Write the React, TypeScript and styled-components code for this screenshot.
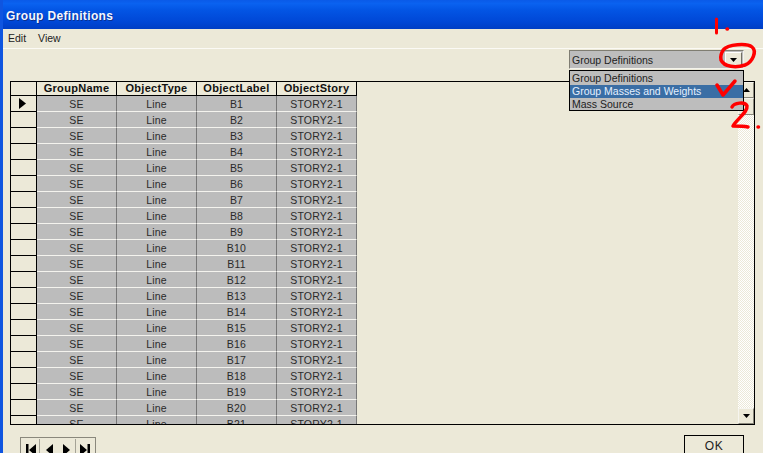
import React from "react";
import styled, { createGlobalStyle } from "styled-components";

const rows = Array.from({ length: 21 }, (_, i) => `B${i + 1}`);
const columns = ["GroupName", "ObjectType", "ObjectLabel", "ObjectStory"];
const options = ["Group Definitions", "Group Masses and Weights", "Mass Source"];

const GlobalStyle = createGlobalStyle`
  html, body { margin: 0; padding: 0; background: #ece9d8; }
  body { font-family: "Liberation Sans", Arial, sans-serif; font-size: 11px; color: #222; }
`;

const App: React.FC = () => {
  return (
    <>
      <GlobalStyle />
      <Window>
        <TitleBar>Group Definitions</TitleBar>
        <MenuBar>
          <MenuItem>Edit</MenuItem>
          <MenuItem>View</MenuItem>
        </MenuBar>
        <Content>
          <TopRow>
            <Combo>
              <ComboValue>Group Definitions</ComboValue>
              <ComboButton>
                <svg width="7" height="4" viewBox="0 0 7 4"><path d="M0 0h7L3.5 4z" fill="#000" /></svg>
              </ComboButton>
              <ComboList>
                {options.map((o, i) => (
                  <ComboOption key={o} $active={i === 1}>{o}</ComboOption>
                ))}
              </ComboList>
            </Combo>
          </TopRow>
          <Grid>
            <GridBody>
              <HeadRow>
                <RowHead />
                {columns.map((c) => <HeadCell key={c}>{c}</HeadCell>)}
              </HeadRow>
              {rows.map((label, i) => (
                <Row key={label}>
                  <RowHead>
                    {i === 0 && (
                      <svg width="7" height="11" viewBox="0 0 7 11"><path d="M0 0l7 5.5L0 11z" fill="#000" /></svg>
                    )}
                  </RowHead>
                  <Cell>SE</Cell>
                  <Cell>Line</Cell>
                  <Cell>{label}</Cell>
                  <Cell>STORY2-1</Cell>
                </Row>
              ))}
            </GridBody>
            <ScrollBar>
              <ScrollButton>
                <svg width="7" height="4" viewBox="0 0 7 4"><path d="M3.5 0L7 4H0z" fill="#000" /></svg>
              </ScrollButton>
              <ScrollThumb />
              <ScrollTrack />
              <ScrollButton>
                <svg width="7" height="4" viewBox="0 0 7 4"><path d="M0 0h7L3.5 4z" fill="#000" /></svg>
              </ScrollButton>
            </ScrollBar>
          </Grid>
          <BottomRow>
            <Navigator>
              <NavButton>
                <svg width="10" height="12" viewBox="0 0 10 12"><path d="M0 0h2.500v12H0zM10 0v12L3 6z" fill="#000" /></svg>
              </NavButton>
              <NavButton $plain>
                <svg width="7" height="12" viewBox="0 0 7 12"><path d="M7 0v12L0 6z" fill="#000" /></svg>
              </NavButton>
              <NavButton>
                <svg width="7" height="12" viewBox="0 0 7 12"><path d="M0 0v12l7-6z" fill="#000" /></svg>
              </NavButton>
              <NavButton $plain>
                <svg width="10" height="12" viewBox="0 0 10 12"><path d="M10 0H7.500v12H10zM0 0v12l7-6z" fill="#000" /></svg>
              </NavButton>
            </Navigator>
            <OkButton>OK</OkButton>
          </BottomRow>
        </Content>
        <Annotations width="763" height="453" viewBox="0 0 763 453" fill="none" stroke="#f00" strokeLinecap="round" strokeLinejoin="round">
          <path d="M716.500 19v14" strokeWidth="3" />
          <path d="M727 29h.5" strokeWidth="3.500" />
          <path d="M723 50C728 44 747 43 752 47C757 51 753 62 745 65C736 68 724 67 721 60C720 56 721 53 724 49" strokeWidth="3.500" />
          <path d="M717 85l6 10 12-14" strokeWidth="3.500" />
          <path d="M732 107c2-4 13-6 15-1 1 6-10 13-14 20 5 0 10 0 15 1" strokeWidth="3.500" />
          <path d="M758 127h.5" strokeWidth="3.500" />
        </Annotations>
      </Window>
    </>
  );
};

export default App;

const Window = styled.div`
  position: relative;
  width: 763px;
  height: 453px;
  overflow: hidden;
  display: flex;
  flex-direction: column;
  box-sizing: border-box;
  border-left: 3px solid #0f55e0;
  background: #ece9d8;
`;

const TitleBar = styled.div`
  height: 29px;
  margin-left: -3px;
  padding: 6px 0 0 6px;
  box-sizing: border-box;
  flex-shrink: 0;
  background: linear-gradient(180deg, #0a5ae8 0%, #0a62f0 12%, #0355e4 35%, #0047d6 75%, #003ec4 100%);
  color: #f4f7ff;
  font-size: 12px;
  font-weight: bold;
  letter-spacing: 0.35px;
  line-height: 20px;
  text-shadow: 1px 1px 0 #0a2f8f;
`;

const MenuBar = styled.div`
  height: 20px;
  flex-shrink: 0;
  display: flex;
  align-items: center;
  gap: 12px;
  padding: 0 0 2px 5px;
  box-sizing: border-box;
  border-bottom: 1px solid #fbfaf5;
`;

const MenuItem = styled.span`
  font-size: 10.500px;
`;

const Content = styled.div`
  flex: 1;
  display: flex;
  flex-direction: column;
  padding-left: 7px;
  min-height: 0;
`;

const TopRow = styled.div`
  height: 32px;
  flex-shrink: 0;
  display: flex;
  justify-content: flex-end;
  padding: 1px 19px 0 0;
  box-sizing: border-box;
`;

const Combo = styled.div`
  position: relative;
  width: 175px;
  height: 19px;
  box-sizing: border-box;
  display: flex;
  align-items: center;
  justify-content: space-between;
  padding: 0 1px 0 2px;
  background: #bdbdbd;
  border: 1px solid;
  border-color: #7f7d72 #f4f3ec #f4f3ec #7f7d72;
`;

const ComboValue = styled.span`
  font-size: 10.500px;
`;

const ComboButton = styled.div`
  width: 17px;
  height: 15px;
  box-sizing: border-box;
  display: flex;
  align-items: center;
  justify-content: center;
  background: #ece9d8;
  border: 1px solid;
  border-color: #fff #716f64 #716f64 #fff;
`;

const ComboList = styled.div`
  position: absolute;
  top: 19px;
  left: -1px;
  width: 175px;
  height: 41px;
  box-sizing: border-box;
  padding-top: 1px;
  background: #bdbdbd;
  border: 1px solid #000;
  z-index: 2;
`;

const ComboOption = styled.div<{ $active: boolean }>`
  height: 13px;
  line-height: 13px;
  padding-left: 2px;
  font-size: 10.500px;
  background: ${({ $active }) => ($active ? "#3a6ea5" : "transparent")};
  color: ${({ $active }) => ($active ? "#e4f0ff" : "#222")};
`;

const Grid = styled.div`
  width: 745px;
  height: 344px;
  flex-shrink: 0;
  box-sizing: border-box;
  border: 1px solid #000;
  display: flex;
  overflow: hidden;
`;

const GridBody = styled.div`
  flex: 1;
  overflow: hidden;
  min-width: 0;
`;

const Row = styled.div`
  display: flex;
  height: 16px;
`;

const HeadRow = styled(Row)`
  height: 14px;
`;

const RowHead = styled.div`
  width: 26px;
  box-sizing: border-box;
  display: flex;
  align-items: center;
  justify-content: center;
  border-right: 1px solid #000;
  border-bottom: 1px solid #000;
  background: #ece9d8;
  padding-right: 3px;
`;

const HeadCell = styled.div`
  width: 80px;
  box-sizing: border-box;
  text-align: center;
  font-weight: bold;
  font-size: 11px;
  line-height: 13px;
  letter-spacing: 0.3px;
  color: #111;
  background: #ece9d8;
  border-right: 1px solid #000;
  border-bottom: 1px solid #000;
`;

const Cell = styled.div`
  width: 80px;
  box-sizing: border-box;
  padding-top: 1px;
  text-align: center;
  font-size: 10.500px;
  line-height: 15px;
  letter-spacing: 0.2px;
  color: #2a2a2a;
  background: #bcbcbc;
  border-right: 1px solid #777;
  border-bottom: 1px solid #f4f3ee;
`;

const ScrollBar = styled.div`
  width: 16px;
  flex-shrink: 0;
  display: flex;
  flex-direction: column;
`;

const ScrollButton = styled.div`
  width: 16px;
  height: 16px;
  flex-shrink: 0;
  box-sizing: border-box;
  display: flex;
  align-items: center;
  justify-content: center;
  background: #ece9d8;
  border: 1px solid;
  border-color: #f6f5ef #8a887c #8a887c #f6f5ef;
`;

const ScrollThumb = styled(ScrollButton)`
  height: 17px;
`;

const ScrollTrack = styled.div`
  flex: 1;
  background-color: #f5f4ec;
  background-image: conic-gradient(#ece9d8 25%, #fff 0 50%, #ece9d8 0 75%, #fff 0);
  background-size: 2px 2px;
`;

const BottomRow = styled.div`
  display: flex;
  justify-content: space-between;
  align-items: flex-start;
  padding: 10px 19px 0 10px;
`;

const Navigator = styled.div`
  display: flex;
  height: 24px;
  margin-top: 2px;
  padding: 1px;
  box-sizing: border-box;
  border: 1px solid #8a887c;
`;

const NavButton = styled.div<{ $plain?: boolean }>`
  width: 18px;
  height: 22px;
  box-sizing: border-box;
  display: flex;
  align-items: center;
  justify-content: center;
  background: #ece9d8;
  border-right: ${({ $plain }) => ($plain ? "none" : "1px solid #a5a396")};
`;

const OkButton = styled.div`
  width: 60px;
  height: 24px;
  box-sizing: border-box;
  text-align: center;
  font-size: 12px;
  line-height: 20px;
  letter-spacing: 0.5px;
  border: 1px solid #000;
  border-bottom-color: #888;
  background: #ece9d8;
`;

const Annotations = styled.svg`
  position: absolute;
  left: -3px;
  top: 0;
  z-index: 3;
  pointer-events: none;
`;
